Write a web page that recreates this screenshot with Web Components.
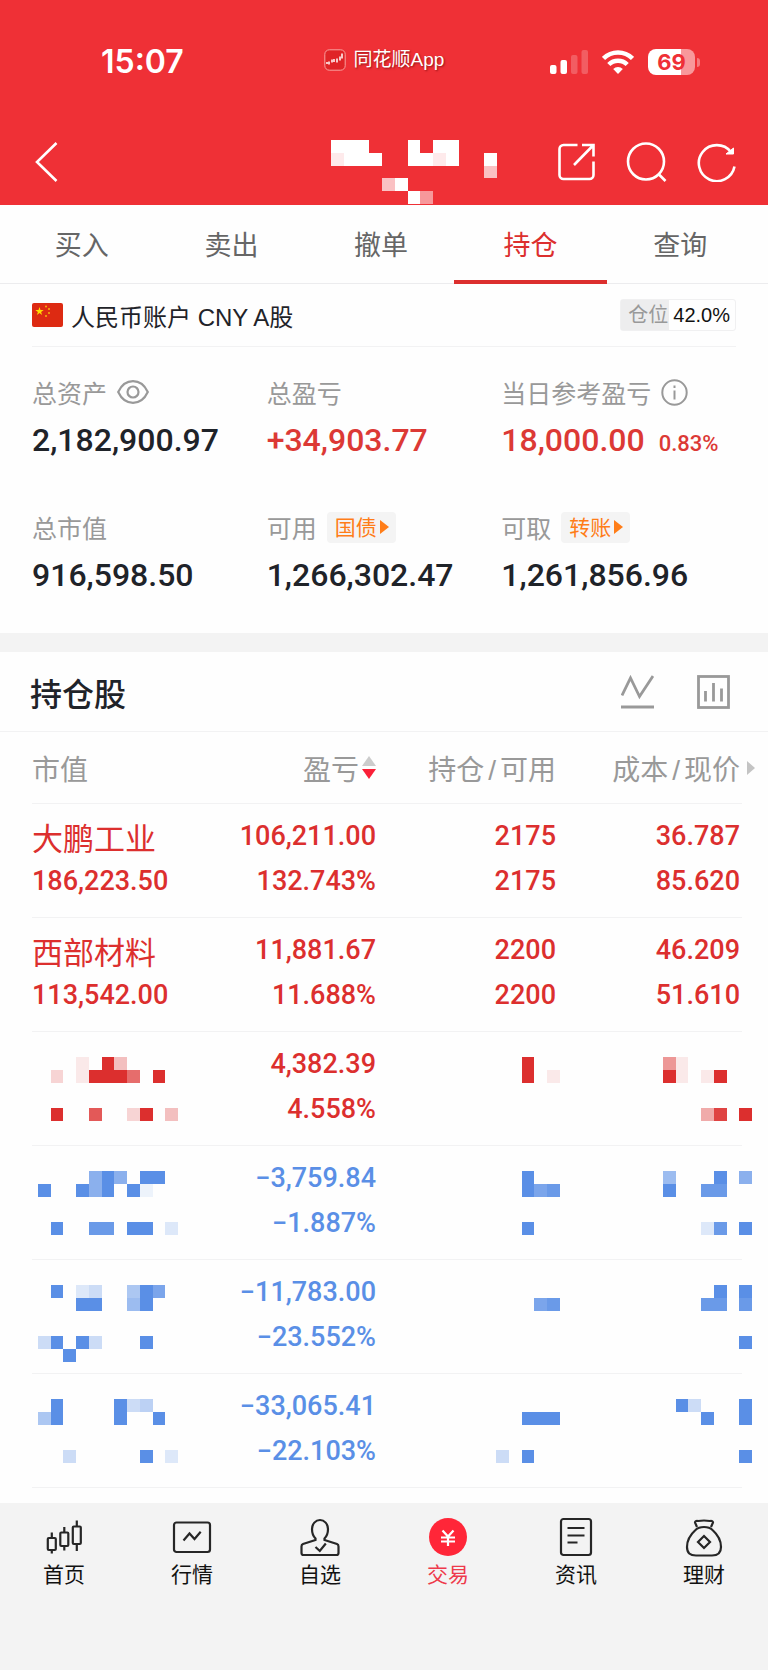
<!DOCTYPE html>
<html lang="zh-CN">
<head>
<meta charset="UTF-8">
<meta name="viewport" content="width=device-width, initial-scale=1">
<title>持仓</title>
<style>
  :root {
    --brand: #ef3036;
    --up: #dc2f2e;
    --down: #5a8fe6;
    --ink: #1f2329;
    --muted: #999;
    --line: #f2f2f3;
    --panel: #f3f3f3;
    --digits: Roboto, "Liberation Sans", sans-serif;
  }

  body {
    margin: 0;
    background: #fefefe;
    color: var(--ink);
    font-family: "Liberation Sans", "Noto Sans CJK SC", sans-serif;
  }

  .app {
    display: flex;
    flex-direction: column;
    min-height: 100vh;
  }

  .stats {
    display: grid;
    grid-template-columns: repeat(3, 1fr);
    row-gap: 44px;
    padding: 28px 32px 36px;
    border-bottom: 19px solid var(--panel);
  }

  bottom-nav {
    flex: 1;
  }
</style>
</head>
<body>
  <div class="app">
    <status-bar time="15:07" battery="69">同花顺App</status-bar>
    <trade-header></trade-header>
    <trade-tabs items="买入,卖出,撤单,持仓,查询" active="持仓"></trade-tabs>
    <main>
      <account-line ratio="42.0%">人民币账户 CNY A股</account-line>
      <section class="stats">
        <stat-item value="2,182,900.97" icon="eye">总资产</stat-item>
        <stat-item value="+34,903.77" tone="up">总盈亏</stat-item>
        <stat-item value="18,000.00" tone="up" extra="0.83%" icon="info">当日参考盈亏</stat-item>
        <stat-item value="916,598.50">总市值</stat-item>
        <stat-item value="1,266,302.47" tag="国债">可用</stat-item>
        <stat-item value="1,261,856.96" tag="转账">可取</stat-item>
      </section>
      <section-head>持仓股</section-head>
      <holdings-table></holdings-table>
    </main>
    <bottom-nav active="交易"></bottom-nav>
  </div>

<script>
class BaseElement extends HTMLElement {
  constructor() {
    super();
    this.attachShadow({ mode: "open" });
  }

  connectedCallback() {
    const template = document.createElement("template");
    template.innerHTML = `
      <style>
        :host { display: block; box-sizing: border-box; }
        button { font: inherit; color: inherit; background: none; border: 0; padding: 0; cursor: pointer; }
        a { color: inherit; text-decoration: none; }
        svg { display: block; flex: none; }
        ${this.getStyles()}
      </style>
      ${this.getTemplate()}
    `;
    this.shadowRoot.appendChild(template.content.cloneNode(true));
  }
}

// Blocks out private values. Each row is a string: "." empty, 1-9 tenths of tint, "#" solid
class MosaicBlock extends BaseElement {
  getStyles() {
    return `:host { display: inline-block; vertical-align: top; }`;
  }

  getTemplate() {
    const rows = this.getAttribute("rows").split("/");
    const cols = Math.max(...rows.map((row) => row.length));
    let rects = "";
    rows.forEach((row, y) => {
      [...row].forEach((c, x) => {
        if (c === ".") return;
        const opacity = c === "#" ? 1 : c / 10;
        rects += `<rect x="${x}" y="${y}" width="1" height="1" opacity="${opacity}"/>`;
      });
    });
    return `
      <svg width="${Math.round(cols * 12.75)}" height="${Math.round(rows.length * 12.75)}"
        viewBox="0 0 ${cols} ${rows.length}" preserveAspectRatio="none"
        fill="currentColor" shape-rendering="crispEdges" aria-hidden="true">${rects}</svg>
    `;
  }
}

class StatusBar extends BaseElement {
  getStyles() {
    return `
      :host {
        display: grid;
        grid-template-columns: 1fr auto 1fr;
        align-items: center;
        padding: 44px 68px 38px 101px;
        background: var(--brand);
        color: #fff;
      }
      .time { font: 600 32px/36px Inter, sans-serif; }
      .app {
        display: flex;
        align-items: center;
        gap: 8px;
        margin: 0 33px 4px 0;
        font-size: 19px;
        line-height: 24px;
        text-shadow: 1px 1px 2px rgba(90, 0, 0, .6);
      }
      .signs { display: flex; align-items: center; justify-content: flex-end; gap: 14px; }
      .battery {
        display: flex;
        align-items: center;
        gap: 2px;
      }
      .level {
        width: 47px;
        border-radius: 8px;
        background: linear-gradient(90deg, #fff 70%, #f8989b 70%);
        color: var(--brand);
        font: 700 22px/26px Inter, sans-serif;
        text-align: center;
      }
      .nub { width: 3px; height: 9px; border-radius: 0 3px 3px 0; background: #f57a7e; }
    `;
  }

  getTemplate() {
    return `
      <span class="time">${this.getAttribute("time")}</span>
      <span class="app">
        <svg width="22" height="22" viewBox="0 0 22 22" fill="none" stroke="#fff">
          <rect x=".8" y=".8" width="20.4" height="20.4" rx="4.5" fill="#e02427" stroke="#f9a09f"/>
          <path d="M2 14h2M5 12.500v3M8 10.500v3M10 10v3M13 9.500v4M16 7.500v4M18 4.500v5" stroke-width="1.500"/>
        </svg>
        <slot></slot>
      </span>
      <span class="signs">
        <svg width="38" height="24" viewBox="0 0 38 24" fill="#fff">
          <rect x="0" y="15" width="6.500" height="9" rx="2"/>
          <rect x="10.500" y="10" width="6.500" height="14" rx="2"/>
          <rect x="21" y="5" width="6.500" height="19" rx="2" opacity=".22"/>
          <rect x="31.500" y="0" width="6.500" height="24" rx="2" opacity=".22"/>
        </svg>
        <svg width="32" height="24" viewBox="0 0 32 24" fill="none" stroke="#fff" stroke-width="4.500">
          <path d="M1.500 8.500a20.500 20.500 0 0 1 29 0"/>
          <path d="M6.800 14.500a13 13 0 0 1 18.400 0"/>
          <path d="M16 24l-4.800-5a6.800 6.800 0 0 1 9.600 0z" fill="#fff" stroke="none"/>
        </svg>
        <span class="battery">
          <span class="level">${this.getAttribute("battery")}</span>
          <span class="nub"></span>
        </span>
      </span>
    `;
  }
}

class TradeHeader extends BaseElement {
  getStyles() {
    return `
      :host {
        display: flex;
        align-items: center;
        height: 87px;
        padding: 0 31px 0 34px;
        background: var(--brand);
        color: #fff;
      }
      mosaic-block { align-self: flex-end; margin: 0 60px 1px auto; }
      .actions { display: flex; gap: 29px; }
    `;
  }

  getTemplate() {
    return `
      <button type="button" aria-label="返回">
        <svg width="24" height="40" viewBox="0 0 24 40" fill="none" stroke="currentColor" stroke-width="2.600">
          <path d="M22.500 1L3 20l19.500 19"/>
        </svg>
      </button>
      <mosaic-block rows="###...#.##.../9###..##9#..#/............7/....7#......./......#5....."></mosaic-block>
      <div class="actions">
        <button type="button" aria-label="分享">
          <svg width="40" height="40" viewBox="0 0 40 40" fill="none" stroke="currentColor" stroke-width="2.600">
            <path d="M20.500 3H6.500A4 4 0 0 0 2.500 7v26a4 4 0 0 0 4 4h26a4 4 0 0 0 4-4V19.500"/>
            <path d="M25 3h11.500v11.500M36.500 3L17 23"/>
          </svg>
        </button>
        <button type="button" aria-label="搜索">
          <svg width="42" height="40" viewBox="0 0 42 40" fill="none" stroke="currentColor" stroke-width="2.600">
            <circle cx="20" cy="19.500" r="18"/>
            <path d="M32.500 32l7 7"/>
          </svg>
        </button>
        <button type="button" aria-label="刷新">
          <svg width="40" height="40" viewBox="0 0 40 40" fill="none" stroke="currentColor" stroke-width="2.600">
            <path d="M37.500 24.500A18 18 0 1 1 34 10"/>
            <path d="M29 12h7.500V6z" fill="currentColor" stroke-width="1"/>
          </svg>
        </button>
      </div>
    `;
  }
}

class TradeTabs extends BaseElement {
  getStyles() {
    return `
      :host { padding: 0 13px 0 7px; border-bottom: 1px solid #ececee; }
      div { display: flex; }
      button {
        position: relative;
        flex: 1;
        padding-top: 5px;
        font-size: 27px;
        line-height: 73px;
        color: #666;
      }
      button[aria-selected="true"] { color: var(--up); }
      button[aria-selected="true"]::after {
        content: "";
        position: absolute;
        inset: auto -2px -1px;
        height: 4px;
        background: var(--up);
      }
    `;
  }

  getTemplate() {
    const active = this.getAttribute("active");
    const tabs = this.getAttribute("items").split(",").map((name) => `
      <button type="button" role="tab" aria-selected="${name === active}">${name}</button>
    `);
    return `<div role="tablist">${tabs.join("")}</div>`;
  }
}

class AccountLine extends BaseElement {
  getStyles() {
    return `
      :host {
        display: flex;
        align-items: center;
        gap: 8px;
        height: 63px;
        margin: 0 32px;
        border-bottom: 1px solid var(--line);
        font-size: 24px;
      }
      .ratio {
        display: flex;
        margin-left: auto;
        border: 1px solid #f0f0f1;
        border-radius: 3px;
        color: #111;
        font-size: 20px;
        line-height: 30px;
      }
      .ratio span { padding: 0 1px 0 7px; background: #ededee; color: var(--muted); }
      .ratio b { padding: 0 5px 0 4px; font-weight: 400; }
    `;
  }

  getTemplate() {
    return `
      <svg width="31" height="24" viewBox="0 0 31 24">
        <rect width="31" height="24" rx="2" fill="#dd2a12"/>
        <path d="M7.500 4l1 3h3.200l-2.600 1.900 1 3.100-2.600-1.900L4.900 12l1-3.100L3.300 7h3.200z" fill="#fd0"/>
        <g fill="#f7b50c"><circle cx="14" cy="3.500" r="1"/><circle cx="17" cy="6" r="1"/><circle cx="17" cy="10" r="1"/><circle cx="14" cy="13" r="1"/></g>
      </svg>
      <slot></slot>
      <div class="ratio"><span>仓位</span><b>${this.getAttribute("ratio")}</b></div>
    `;
  }
}

class StatItem extends BaseElement {
  getStyles() {
    return `
      .label {
        display: flex;
        align-items: center;
        gap: 10px;
        height: 34px;
        color: var(--muted);
        font-size: 25px;
        white-space: nowrap;
      }
      .value {
        display: flex;
        align-items: baseline;
        gap: 14px;
        margin-top: 9px;
        font: 500 32px/44px var(--digits);
      }
      .up { color: #dc3935; }
      small { font-size: 22px; }
      .tag {
        display: flex;
        align-items: center;
        gap: 3px;
        padding: 0 7px 0 8px;
        border-radius: 4px;
        background: #f4f4f4;
        color: #ff7d18;
        font-size: 21px;
        line-height: 31px;
      }
    `;
  }

  getIcon(name) {
    if (name === "eye") {
      return `
        <button type="button" aria-label="隐藏金额">
          <svg width="32" height="24" viewBox="0 0 32 24" fill="none" stroke="currentColor" stroke-width="2.200">
            <path d="M1.200 12C4.500 5 10 1.200 16 1.200S27.500 5 30.800 12c-3.300 7-8.800 10.800-14.800 10.800S4.500 19 1.200 12z"/>
            <circle cx="16" cy="12" r="5.500"/>
          </svg>
        </button>`;
    }
    if (name === "info") {
      return `
        <button type="button" aria-label="说明">
          <svg width="27" height="27" viewBox="0 0 27 27" fill="none" stroke="currentColor" stroke-width="2">
            <circle cx="13.500" cy="13.500" r="12.200"/>
            <path d="M13.500 11.500v9M13.500 6.500v2.500"/>
          </svg>
        </button>`;
    }
    return "";
  }

  getTemplate() {
    const tag = this.getAttribute("tag");
    const extra = this.getAttribute("extra");
    return `
      <div class="label">
        <slot></slot>
        ${this.getIcon(this.getAttribute("icon"))}
        ${tag ? `<button type="button" class="tag">${tag}<svg width="9" height="14" viewBox="0 0 9 14" fill="currentColor"><path d="M0 0l9 7-9 7z"/></svg></button>` : ""}
      </div>
      <div class="value ${this.getAttribute("tone") || ""}">
        <span>${this.getAttribute("value")}</span>
        ${extra ? `<small>${extra}</small>` : ""}
      </div>
    `;
  }
}

class SectionHead extends BaseElement {
  getStyles() {
    return `
      :host {
        display: flex;
        align-items: center;
        gap: 43px;
        height: 80px;
        padding: 0 38px 0 30px;
        border-bottom: 1px solid var(--line);
      }
      h2 { margin: 0 auto 0 0; font-size: 32px; font-weight: 500; }
      button { color: var(--muted); }
    `;
  }

  getTemplate() {
    return `
      <h2><slot></slot></h2>
      <button type="button" aria-label="走势">
        <svg width="33" height="34" viewBox="0 0 33 34" fill="none" stroke="currentColor" stroke-width="2.800">
          <path d="M1 20.500L9.500 3l9 18.500L32 1M0 32h33"/>
        </svg>
      </button>
      <button type="button" aria-label="分析">
        <svg width="33" height="34" viewBox="0 0 33 34" fill="none" stroke="currentColor" stroke-width="2.800">
          <rect x="1.500" y="1.500" width="30" height="31"/>
          <path d="M8.500 16v10.500M16.500 8v18.500M24.500 13.500v13"/>
        </svg>
      </button>
    `;
  }
}

class HoldingsTable extends BaseElement {
  get rows() {
    return [
      { tone: "up", name: "大鹏工业", value: "186,223.50", profit: ["106,211.00", "132.743%"], amount: ["2175", "2175"], price: ["36.787", "85.620"] },
      { tone: "up", name: "西部材料", value: "113,542.00", profit: ["11,881.67", "11.688%"], amount: ["2200", "2200"], price: ["46.209", "51.610"] },
      {
        tone: "up", profit: ["4,382.39", "4.558%"],
        masks: ["...1.#3..../.2.1###7.#.///.#..8..2#.3", "..#../..#.1", "51...../#1.1#..///...49.#"]
      },
      {
        tone: "down", profit: ["−3,759.84", "−1.887%"],
        masks: ["....7#7.##./#..#7#.#1..///.#..99.##.2", "..#../..#89///..#..", "6...#.7/#..99..///...29.#"]
      },
      {
        tone: "down", profit: ["−11,783.00", "−23.552%"],
        masks: [".#.23..5#8./...##..6#..///3#.#3...#../..#........", "...../...89", "....#.#/...99.9///......#"]
      },
      {
        tone: "down", profit: ["−33,065.41", "−22.103%"],
        masks: [".#....#34../5#....#..#.///..3.....#.2", "...../..###///3.#..", ".#3...#/...#..#///......#"]
      }
    ];
  }

  getStyles() {
    return `
      :host { padding: 0 26px 15px 32px; }
      table { width: 100%; border-collapse: collapse; table-layout: fixed; }
      col:nth-child(2) { width: 176px; }
      col:nth-child(3) { width: 180px; }
      col:nth-child(4) { width: 186px; }
      tr { border-bottom: 1px solid var(--line); }
      th {
        height: 71px;
        padding: 0;
        color: var(--muted);
        font-size: 28px;
        font-weight: 400;
        text-align: right;
        white-space: nowrap;
      }
      td {
        height: 93px;
        padding: 10px 0;
        vertical-align: top;
        text-align: right;
        font: 500 27px/45px var(--digits);
      }
      th:first-child, td:first-child { text-align: left; }
      th:last-child, td:last-child { padding-right: 2px; }
      .slash { padding: 0 4px; }
      .sort { display: inline-flex; align-items: center; gap: 3px; }
      .last { position: relative; }
      .more { position: absolute; right: -13px; top: 29px; }
      .up { color: var(--up); }
      .down { color: var(--down); }
      .name { font: 400 31px/45px "Noto Sans CJK SC", sans-serif; }
      mosaic-block { margin: 15px -4px 0 6px; }
      td:last-child mosaic-block { margin-right: -12px; }
    `;
  }

  getCell(lines) {
    return `<td><div>${lines[0]}</div><div>${lines[1]}</div></td>`;
  }

  getMask(rows) {
    return `<td><mosaic-block rows="${rows}"></mosaic-block></td>`;
  }

  getRow({ tone, name, value, profit, amount, price, masks }) {
    if (masks) {
      return `
        <tr class="${tone}">
          ${this.getMask(masks[0])}
          ${this.getCell(profit)}
          ${this.getMask(masks[1])}
          ${this.getMask(masks[2])}
        </tr>`;
    }
    return `
      <tr class="${tone}">
        <td><div class="name">${name}</div><div>${value}</div></td>
        ${this.getCell(profit)}
        ${this.getCell(amount)}
        ${this.getCell(price)}
      </tr>`;
  }

  getTemplate() {
    return `
      <table>
        <colgroup><col><col><col><col></colgroup>
        <thead>
          <tr>
            <th scope="col">市值</th>
            <th scope="col">
              <button type="button" class="sort">盈亏<svg width="14" height="24" viewBox="0 0 14 24"><path d="M7 0l7 10H0z" fill="#ccc"/><path d="M7 23l7-10H0z" fill="#fa2038"/></svg></button>
            </th>
            <th scope="col">持仓<span class="slash">/</span>可用</th>
            <th scope="col" class="last">成本<span class="slash">/</span>现价<svg class="more" width="8" height="14" viewBox="0 0 8 14" fill="#c4c4c4"><path d="M0 0l8 7-8 7z"/></svg></th>
          </tr>
        </thead>
        <tbody>${this.rows.map((row) => this.getRow(row)).join("")}</tbody>
      </table>
    `;
  }
}

class BottomNav extends BaseElement {
  get items() {
    return {
      首页: `
        <rect x="3.800" y="21" width="8" height="12" rx="1"/><path d="M7.800 15.500V21M7.800 33v3.500"/>
        <rect x="16.300" y="15.500" width="8" height="13.500" rx="1"/><path d="M20.300 10v5.500M20.300 29v4.500"/>
        <rect x="28.800" y="9.500" width="8" height="17.500" rx="1"/><path d="M32.800 3.500v6M32.800 27v7"/>`,
      行情: `
        <rect x="2" y="5.500" width="36" height="29.500" rx="2.500"/>
        <path d="M11.500 23.500l6-7 5 5.500 6.200-7.200"/>`,
      自选: `
        <path d="M15.500 21.500c-2.500-2.500-3.500-5.500-3.500-9.500a8 9 0 0 1 16 0c0 4-1 7-3.500 9.500v1.500l12.500 4q1.500.6 1.500 2.500v6.500q0 2-2 2h-33q-2 0-2-2v-6.500q0-1.900 1.500-2.500l12.500-4z"/>
        <path d="M15.500 30l4.300 4 6-7.500"/>`,
      交易: `
        <circle cx="20" cy="20" r="19" fill="#ff2638" stroke="none"/>
        <path d="M14.500 13.500l5.500 6 5.500-6M13 20.500h14M13 24.500h14M20 19v10" stroke="#fff"/>`,
      资讯: `
        <rect x="5" y="2" width="30" height="36" rx="2.500"/>
        <path d="M11.500 11h17M11.500 18.500h17M11.500 25.500h10"/>`,
      理财: `
        <path d="M13 10l-2-4.500Q11 3.500 14 4q6-1 12 0 3-.5 3 1.500L27 10"/>
        <path d="M20 10c4 0 6.500 1 8.500 3 4.500 4 8.500 10 8.500 17 0 6-3 8.500-9 8.500H12c-6 0-9-2.500-9-8.500 0-7 4-13 8.500-17 2-2 4.500-3 8.500-3z"/>
        <path d="M20 19l6 6-6 6-6-6z"/>`
    };
  }

  getStyles() {
    return `
      :host { background: var(--panel); color: #111; }
      nav { display: flex; padding: 14px 0 80px; }
      a {
        flex: 1;
        display: flex;
        flex-direction: column;
        align-items: center;
        gap: 3px;
        font-size: 21px;
        line-height: 30px;
      }
      a[aria-current] { color: #ee3a4b; }
      svg { stroke: #262626; }
    `;
  }

  getTemplate() {
    const active = this.getAttribute("active");
    const links = Object.entries(this.items).map(([name, icon]) => `
      <a href="#" ${name === active ? `aria-current="page"` : ""}>
        <svg width="40" height="40" viewBox="0 0 40 40" fill="none" stroke-width="2.200" aria-hidden="true">${icon}</svg>
        ${name}
      </a>
    `);
    return `<nav>${links.join("")}</nav>`;
  }
}

customElements.define("mosaic-block", MosaicBlock);
customElements.define("status-bar", StatusBar);
customElements.define("trade-header", TradeHeader);
customElements.define("trade-tabs", TradeTabs);
customElements.define("account-line", AccountLine);
customElements.define("stat-item", StatItem);
customElements.define("section-head", SectionHead);
customElements.define("holdings-table", HoldingsTable);
customElements.define("bottom-nav", BottomNav);
</script>
</body>
</html>
